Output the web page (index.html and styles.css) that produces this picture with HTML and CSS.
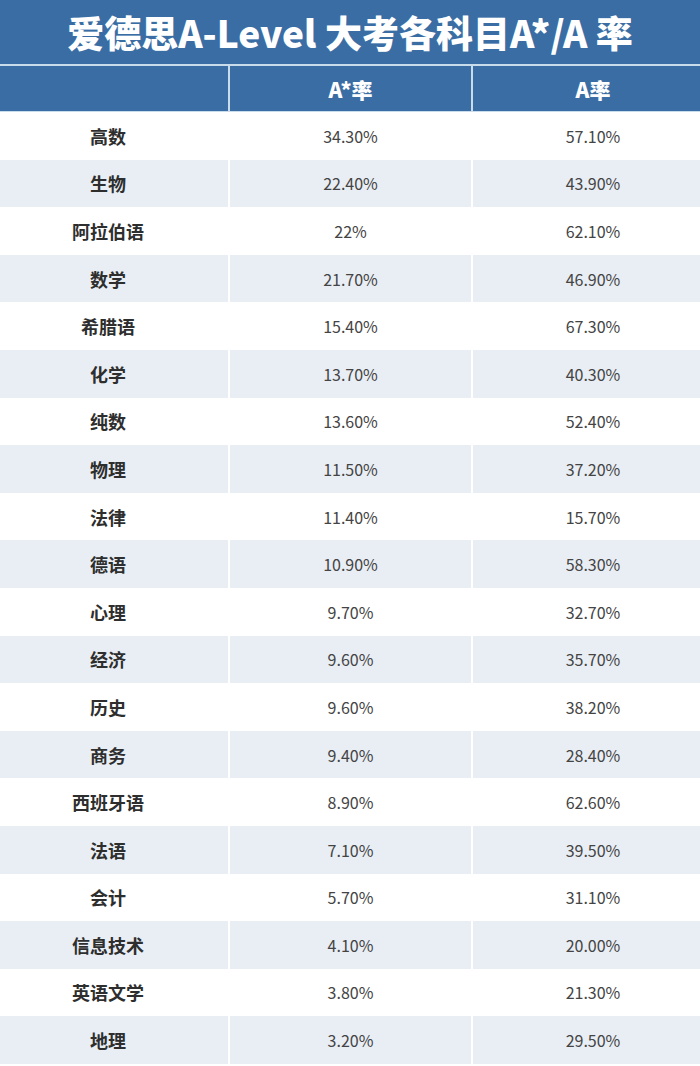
FILE: index.html
```html
<!DOCTYPE html>
<html lang="zh">
<head>
<meta charset="utf-8">
<link rel="stylesheet" href="styles.css">
</head>
<body>
<div class="page">
  <div class="title">爱德思A-Level 大考各科目A*/A 率</div>
  <div class="table">
    <div class="row head"><div class="cell"></div><div class="cell">A*率</div><div class="cell">A率</div></div>
    <div class="row"><div class="cell name">高数</div><div class="cell">34.30%</div><div class="cell">57.10%</div></div>
    <div class="row alt"><div class="cell name">生物</div><div class="cell">22.40%</div><div class="cell">43.90%</div></div>
    <div class="row"><div class="cell name">阿拉伯语</div><div class="cell">22%</div><div class="cell">62.10%</div></div>
    <div class="row alt"><div class="cell name">数学</div><div class="cell">21.70%</div><div class="cell">46.90%</div></div>
    <div class="row"><div class="cell name">希腊语</div><div class="cell">15.40%</div><div class="cell">67.30%</div></div>
    <div class="row alt"><div class="cell name">化学</div><div class="cell">13.70%</div><div class="cell">40.30%</div></div>
    <div class="row"><div class="cell name">纯数</div><div class="cell">13.60%</div><div class="cell">52.40%</div></div>
    <div class="row alt"><div class="cell name">物理</div><div class="cell">11.50%</div><div class="cell">37.20%</div></div>
    <div class="row"><div class="cell name">法律</div><div class="cell">11.40%</div><div class="cell">15.70%</div></div>
    <div class="row alt"><div class="cell name">德语</div><div class="cell">10.90%</div><div class="cell">58.30%</div></div>
    <div class="row"><div class="cell name">心理</div><div class="cell">9.70%</div><div class="cell">32.70%</div></div>
    <div class="row alt"><div class="cell name">经济</div><div class="cell">9.60%</div><div class="cell">35.70%</div></div>
    <div class="row"><div class="cell name">历史</div><div class="cell">9.60%</div><div class="cell">38.20%</div></div>
    <div class="row alt"><div class="cell name">商务</div><div class="cell">9.40%</div><div class="cell">28.40%</div></div>
    <div class="row"><div class="cell name">西班牙语</div><div class="cell">8.90%</div><div class="cell">62.60%</div></div>
    <div class="row alt"><div class="cell name">法语</div><div class="cell">7.10%</div><div class="cell">39.50%</div></div>
    <div class="row"><div class="cell name">会计</div><div class="cell">5.70%</div><div class="cell">31.10%</div></div>
    <div class="row alt"><div class="cell name">信息技术</div><div class="cell">4.10%</div><div class="cell">20.00%</div></div>
    <div class="row"><div class="cell name">英语文学</div><div class="cell">3.80%</div><div class="cell">21.30%</div></div>
    <div class="row alt"><div class="cell name">地理</div><div class="cell">3.20%</div><div class="cell">29.50%</div></div>
  </div>
</div>
</body>
</html>
```
FILE: styles.css
```css
html, body {
  margin: 0;
  padding: 0;
  background: #ffffff;
}
.page {
  width: 700px;
  font-family: "Noto Sans CJK SC", "Noto Sans", sans-serif;
  color: #333333;
}
.title {
  height: 64px;
  background: #3a6da4;
  color: #ffffff;
  font-weight: 900;
  font-size: 37px;
  line-height: 64px;
  text-align: center;
  letter-spacing: 0;
  border-bottom: 2px solid #c9dcec;
}
.table {
  display: flex;
  flex-direction: column;
}
.row {
  display: grid;
  grid-template-columns: 228px 241px 1fr;
  column-gap: 2px;
  height: 47.6px;
  background: #ffffff;
}
.row.head {
  height: 46px;
  background: #c9dcec;
}
.row.head .cell {
  background: #3a6da4;
  color: #ffffff;
  font-weight: 900;
  font-size: 21px;
  height: 45px;
}
.cell {
  display: flex;
  align-items: center;
  justify-content: center;
  font-size: 16px;
  background: #ffffff;
  color: #444444;
}
.cell:first-child {
  padding-right: 12px;
}
.cell:last-child {
  padding-left: 13px;
}
.row.alt .cell {
  background: #e9eef5;
}
.cell.name {
  font-weight: 700;
  font-size: 18px;
  color: #2e2e2e;
}
```
